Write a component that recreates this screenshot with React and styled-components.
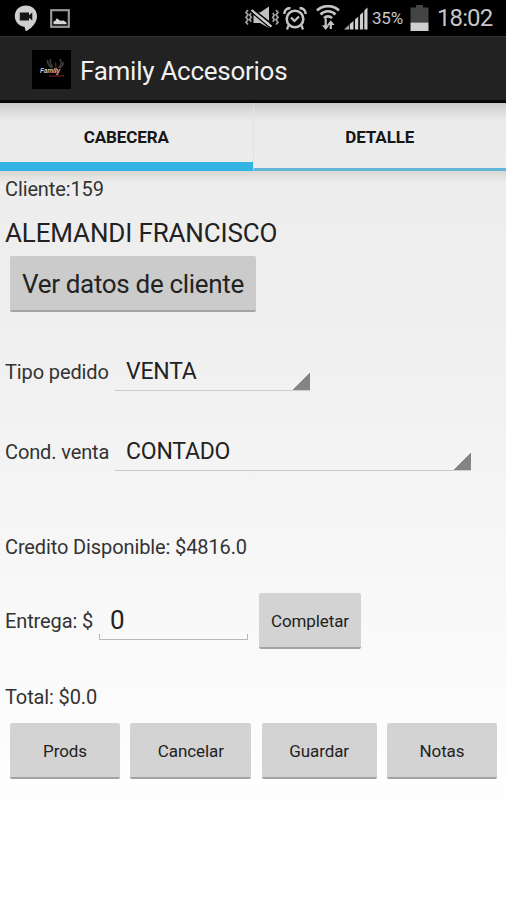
import React, {useState} from 'react';
import styled, {createGlobalStyle} from 'styled-components';

const GlobalStyle = createGlobalStyle`
    * { box-sizing: border-box; }
    body {
        margin: 0;
        background: #fff;
        font-family: Roboto, "Liberation Sans", sans-serif;
    }
    button, input { font-family: inherit; }
`

const ChatIcon = () => (
    <svg width="24" height="27" viewBox="0 0 24 27">
        <path d="M12 .5C5.600.5.8 5 .8 11.200c0 5.800 4.600 9.800 9.700 10.600l1 3.700c.2.700.8.700 1.400.3C17 23 23 18.500 23 11.200 23 5 18.300.5 12 .5z" fill="#cfcfcf"/>
        <path d="M5.800 7.500h9.200v2.700l3.300-2.700v8l-3.300-2.700v2.700H5.800z" fill="#151515"/>
    </svg>
)

const PictureIcon = () => (
    <svg width="20" height="19" viewBox="0 0 20 19">
        <rect x="1.200" y="1.200" width="17.600" height="16.600" fill="none" stroke="#979797" strokeWidth="2.200"/>
        <path d="M3.500 15.300v-2.800l2-.8.5-1.700 1.500-.6 1.700 1.800 2.300.6 2-.3 3 2v1.800z" fill="#d6d6d6"/>
    </svg>
)

const VibrateIcon = () => (
    <svg width="34" height="24" viewBox="0 0 34 24" fill="none" stroke="#a4a4a4" strokeWidth="1.700">
        <path d="M3 4L1 6.300l2 2.500-2 2.500 2 2.500-2 2.500L3 18.500M6.200 7L4.800 9l1.400 2.300L4.800 13.500l1.400 2.300M31 4l2 2.300-2 2.500 2 2.500-2 2.500 2 2.500-2 2.200M27.800 7l1.400 2-1.400 2.300 1.400 2.200-1.400 2.300"/>
        <path d="M8.500 6.500H15L24 .5v21.500L15 17H8.500z" fill="#c0c0c0" stroke="none"/>
        <path d="M7.500 2.800L27.500 18.600" stroke="#000" strokeWidth="1.700"/>
        <path d="M5.500 5.400L25.500 22.300" stroke="#000" strokeWidth="1.500"/>
        <path d="M6.500 4L26.500 20.600" stroke="#cacaca" strokeWidth="2.200"/>
    </svg>
)

const AlarmIcon = () => (
    <svg width="24" height="25" viewBox="0 0 24 25" fill="none" stroke="#c4c4c4" strokeWidth="2.200">
        <circle cx="12" cy="13" r="8.300" strokeWidth="2.600"/>
        <path d="M8 11.500l3.500 3.500 4.500-4.500M5.500 19.500L4 23.500M18.500 19.500l1.500 4"/>
        <path d="M1.300 8C1.500 4.500 4 2.200 7.500 2M22.700 8C22.500 4.500 20 2.200 16.500 2" strokeWidth="2.400"/>
    </svg>
)

const WifiIcon = () => (
    <svg width="24" height="26" viewBox="0 0 24 26" fill="none" stroke="#c4c4c4" strokeWidth="2.600">
        <path d="M1 5.500C7-.3 17-.3 23 5.500M4.500 9.500c4-4.300 11-4.300 15 0M8 13.200c2.400-2.500 5.600-2.500 8 0"/>
        <path d="M9.700 13.500v8M14.800 24v-6" strokeWidth="2.200"/>
        <path d="M6 20.300h7.400l-3.700 4.700zM11 20h7.600l-3.800-4.700z" fill="#c4c4c4" stroke="none"/>
    </svg>
)

const SignalIcon = () => (
    <svg width="24" height="23" viewBox="0 0 24 23">
        <path d="M0 22.500l5-4.500v4.500z" fill="#a9a9a9"/>
        <path d="M5.800 22.500V17l3.700-3v8.500zM11 22.500V12.500l3.200-2.700v12.700zM15.900 22.500V8l3.200-3v17.500zM20.300 22.500V3.500L23.500.5v22z" fill="#d0d0d0"/>
    </svg>
)

const BatteryIcon = () => (
    <svg width="19" height="26" viewBox="0 0 19 26">
        <path d="M6 0h7v2.500h5.500v15H.5v-15H6z" fill="#444"/>
        <path d="M.5 17.500h18v8.500H.5z" fill="#cfcfcf"/>
    </svg>
)

const Logo = () => (
    <svg width="39" height="39" viewBox="0 0 39 39">
        <rect width="39" height="39" fill="#000"/>
        <path d="M15.500 10q0 5 4.500 8M18.500 9q-1 5 2.500 8M28 9q3 5-2 9M31 12q1 4-4 6" fill="none" stroke="#3d3d3d" strokeWidth="1.600"/>
        <path d="M23.500 12.500l1 12" stroke="#6a1c22" strokeWidth="1.400"/>
        <text x="8" y="23" fontFamily="Liberation Sans" fontSize="6.500" fontStyle="italic" fontWeight="bold" fill="#c9c9c9" textLength="20">Family</text>
        <path d="M17 26h15" stroke="#5c1a1e" strokeWidth="1.500"/>
    </svg>
)

const buttons = [
    {name: 'Prods', width: 110},
    {name: 'Cancelar', width: 121},
    {name: 'Guardar', width: 115},
    {name: 'Notas', width: 110},
]

const App = () => {
    const [tab, setTab] = useState('CABECERA')
    const [entrega, setEntrega] = useState('0')

    return (
        <Screen>
            <GlobalStyle/>
            <StatusBar>
                <ChatIcon/>
                <PictureIcon/>
                <StatusRight>
                    <VibrateIcon/>
                    <AlarmIcon/>
                    <Network>
                        <WifiIcon/>
                        <SignalIcon/>
                    </Network>
                    <Percent>35%</Percent>
                    <BatteryIcon/>
                    <Clock>18:02</Clock>
                </StatusRight>
            </StatusBar>
            <ActionBar>
                <Logo/>
                <Title>Family Accesorios</Title>
            </ActionBar>
            <Tabs>
                {['CABECERA', 'DETALLE'].map(name => (
                    <Tab key={name} $active={tab === name} onClick={() => setTab(name)}>{name}</Tab>
                ))}
            </Tabs>
            <Form>
                <Row $height={36}>
                    <Label>Cliente:159</Label>
                </Row>
                <Row $height={49} $drop={3}>
                    <ClientName>ALEMANDI FRANCISCO</ClientName>
                </Row>
                <Row $height={56} $indent>
                    <Button $width={246} $large>Ver datos de cliente</Button>
                </Row>
                <Row $height={80} $top={20}>
                    <Label $width={110}>Tipo pedido</Label>
                    <Spinner $width={195}>VENTA</Spinner>
                </Row>
                <Row $height={80}>
                    <Label $width={110}>Cond. venta</Label>
                    <Spinner $width={356}>CONTADO</Spinner>
                </Row>
                <Row $height={70} $top={20}>
                    <Label>Credito Disponible: $4816.0</Label>
                </Row>
                <Row $height={78}>
                    <Label $width={94}>Entrega: $</Label>
                    <AmountBox>
                        <Amount value={entrega} onChange={e => setEntrega(e.target.value)}/>
                    </AmountBox>
                    <Button $width={102}>Completar</Button>
                </Row>
                <Row $height={53} $top={10}>
                    <Label>Total: $0.0</Label>
                </Row>
                <ButtonBar>
                    {buttons.map(b => <Button key={b.name} $width={b.width}>{b.name}</Button>)}
                </ButtonBar>
            </Form>
        </Screen>
    )
}

export default App;


const Screen = styled.main`
    display: flex;
    flex-direction: column;
    width: 506px;
    height: 900px;
    overflow: hidden;
    color: #222;
    background: linear-gradient(#ececec 100px, #efefef 320px, #f7f7f7 560px, #fefefe 800px);
`

const StatusBar = styled.header`
    display: flex;
    align-items: center;
    flex: none;
    height: 36px;
    padding: 0 13px 0 14px;
    gap: 12px;
    background: #000;
`

const StatusRight = styled.div`
    display: flex;
    align-items: center;
    gap: 4px;
    margin-left: auto;
    color: #c6c6c6;
`

const Network = styled.div`
    display: flex;
    align-items: center;
    gap: 4px;
    margin-left: 5px;
`

const Percent = styled.span`
    width: 33px;
    font-size: 17px;
    letter-spacing: -.2px;
    margin-right: 1px;
`

const Clock = styled.span`
    width: 56px;
    font-size: 24px;
    letter-spacing: -.9px;
    margin-left: 4px;
    white-space: nowrap;
`

const ActionBar = styled.div`
    display: flex;
    align-items: center;
    flex: none;
    height: 67px;
    padding: 2px 32px 0;
    gap: 9px;
    background: #222;
    border-top: 1px solid #333;
    border-bottom: 3px solid #060606;
`

const Title = styled.h1`
    margin: 0;
    padding-top: 2px;
    font-size: 26px;
    font-weight: 400;
    letter-spacing: -.27px;
    color: #f1f1f1;
`

const Tabs = styled.nav`
    display: flex;
    flex: none;
    height: 68px;
    background: linear-gradient(#c9c9c9, #dcdcdc 8px, #ebebeb 18px, #ececec);
`

const Tab = styled.button`
    flex: 1;
    padding: ${props => props.$active ? '9px 0 0' : '3px 0 0'};
    border: 0;
    border-bottom: ${props => props.$active ? '9px solid #32b3e3' : '3px solid #62b5d8'};
    background: none;
    font-size: 17px;
    font-weight: 700;
    letter-spacing: -.1px;
    color: #161616;
    & + & { border-left: 1px solid #e2e2e2; }
`

const Form = styled.section`
    display: flex;
    flex-direction: column;
    background: linear-gradient(#d9d7d4, rgba(235, 235, 235, 0) 12px);
`

const Row = styled.div`
    display: flex;
    align-items: center;
    flex: none;
    height: ${props => props.$height}px;
    margin-top: ${props => props.$top || 0}px;
    padding-top: ${props => props.$drop || 0}px;
    padding-left: ${props => props.$indent ? 10 : 5}px;
`

const Label = styled.span`
    width: ${props => props.$width ? props.$width + 'px' : 'auto'};
    font-size: 20px;
    letter-spacing: -.12px;
    color: #333;
    white-space: pre;
`

const ClientName = styled.h2`
    margin: 0;
    font-size: 26px;
    font-weight: 400;
    letter-spacing: -.15px;
    color: #222;
`

const Button = styled.button`
    flex: none;
    width: ${props => props.$width}px;
    height: 56px;
    padding: ${props => props.$large ? '2px 0 0' : '1px 0 0'};
    border: 0;
    border-bottom: 2px solid #a3a3a3;
    border-radius: 2px;
    background: ${props => props.$large ? '#cbcbcb' : '#d3d3d3'};
    font-size: ${props => props.$large ? 26 : 17}px;
    letter-spacing: ${props => props.$large ? -.32 : -.1}px;
    color: #222;
`

const Spinner = styled.div`
    display: flex;
    align-items: center;
    width: ${props => props.$width}px;
    height: 40px;
    margin-bottom: 2px;
    padding: 2px 0 0 11px;
    border-bottom: 1px solid #cdcdcd;
    background: linear-gradient(135deg, transparent 50%, #848484 51%) right bottom / 18px 18px no-repeat;
    font-size: 23px;
    letter-spacing: -.2px;
    color: #222;
`

/* short ticks on both ends of the underline */
const AmountBox = styled.div`
    width: 149px;
    height: 38px;
    margin-right: 11px;
    border-bottom: 1px solid #b9b9b9;
    background:
        linear-gradient(#b9b9b9, #b9b9b9) left bottom / 1px 5px no-repeat,
        linear-gradient(#b9b9b9, #b9b9b9) right bottom / 1px 5px no-repeat;
`

const Amount = styled.input`
    width: 100%;
    height: 100%;
    padding: 0 0 2px 11px;
    border: 0;
    outline: 0;
    background: none;
    font-size: 26px;
    color: #222;
`

const ButtonBar = styled.footer`
    display: flex;
    justify-content: space-between;
    padding: 0 9px 0 10px;
`
